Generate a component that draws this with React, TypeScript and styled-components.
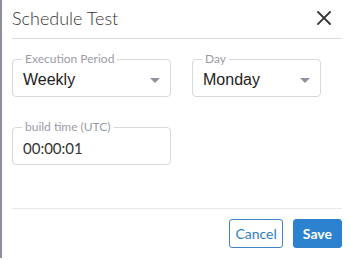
import React from "react";
import styled, { createGlobalStyle } from "styled-components";

const Global = createGlobalStyle`
  html, body { margin: 0; padding: 0; background: #ffffff; }
  body { font-family: Lato, "Liberation Sans", Arial, sans-serif; }
  * { box-sizing: border-box; }
`;

const Page = styled.div`
  display: flex;
  width: 351px;
  height: 260px;
  background: #ffffff;
`;

const Backdrop = styled.div`
  width: 2px;
  height: 258px;
  background: #8d909a;
  flex: none;
`;

const Dialog = styled.div`
  flex: 1;
  height: 258px;
  display: flex;
  flex-direction: column;
  padding: 0 9px 0 10px;
  background: #ffffff;
  border-bottom-left-radius: 3px;
`;

const Header = styled.div`
  height: 39px;
  display: flex;
  align-items: center;
  justify-content: space-between;
  padding-bottom: 2px;
  border-bottom: 1px solid #dcdde3;
`;

const Title = styled.h2`
  margin: 0;
  font-family: Lato, "Open Sans", sans-serif;
  font-size: 18px;
  font-weight: 300;
  color: #333;
  line-height: 22px;
`;

const CloseButton = styled.button`
  width: 16px;
  height: 16px;
  margin-right: 10px;
  padding: 0;
  border: none;
  background: transparent;
  display: flex;
  align-items: center;
  justify-content: center;
  color: #333;
`;

const Body = styled.div`
  flex: 1;
  display: flex;
  flex-direction: column;
  gap: 23px;
  padding-top: 13px;
  border-bottom: 1px solid #e9e9ec;
`;

const Row = styled.div`
  display: flex;
  gap: 21px;
`;

const Field = styled.fieldset<{ $w: number }>`
  width: ${(p) => p.$w}px;
  margin: 0;
  padding: 0 9px 0 9px;
  border: 1px solid #d8d9df;
  border-radius: 4px;
  min-width: 0;
`;

const Legend = styled.legend`
  padding: 0 3px;
  font-family: Lato, "Open Sans", sans-serif;
  font-size: 12px;
  line-height: 14px;
  color: #9a9ca8;
`;

const SelectRow = styled.div`
  height: 30px;
  display: flex;
  align-items: center;
  justify-content: space-between;
  padding: 0 0 2px 1px;
`;

const SelectValue = styled.span`
  font-family: "Liberation Sans", Arial, sans-serif;
  font-size: 16px;
  color: #222;
`;

const Caret = styled.span`
  width: 0;
  height: 0;
  border-left: 5.5px solid transparent;
  border-right: 5.5px solid transparent;
  border-top: 5px solid #8f93a0;
  margin-right: 1px;
`;

const InputValue = styled.div`
  height: 30px;
  display: flex;
  align-items: center;
  padding: 0 0 2px 1px;
  font-family: Lato, "Open Sans", sans-serif;
  font-size: 15px;
  color: #333;
`;

const Footer = styled.div`
  height: 49px;
  display: flex;
  justify-content: flex-end;
  align-items: flex-start;
  gap: 10px;
  padding-top: 10px;
`;

const Button = styled.button<{ $primary?: boolean }>`
  height: 29px;
  padding: 0 ${(p) => (p.$primary ? "9px" : "5px")};
  border-radius: 3px;
  font-family: Lato, "Open Sans", sans-serif;
  font-size: 14px;
  font-weight: ${(p) => (p.$primary ? 700 : 400)};
  border: 1px solid ${(p) => (p.$primary ? "#2d82d0" : "#3a86c8")};
  background: ${(p) => (p.$primary ? "#2d82d0" : "#ffffff")};
  color: ${(p) => (p.$primary ? "#ffffff" : "#2f7dc0")};
`;

export default function App() {
  return (
    <>
      <Global />
      <Page>
        <Backdrop />
        <Dialog>
          <Header>
            <Title>Schedule Test</Title>
            <CloseButton aria-label="Close">
              <svg width="14" height="14" viewBox="0 0 14 14">
                <path d="M1 1 L13 13 M13 1 L1 13" stroke="currentColor" strokeWidth="1.8" strokeLinecap="square" />
              </svg>
            </CloseButton>
          </Header>
          <Body>
            <Row>
              <Field $w={159}>
                <Legend>Execution Period</Legend>
                <SelectRow>
                  <SelectValue>Weekly</SelectValue>
                  <Caret />
                </SelectRow>
              </Field>
              <Field $w={129}>
                <Legend>Day</Legend>
                <SelectRow>
                  <SelectValue>Monday</SelectValue>
                  <Caret />
                </SelectRow>
              </Field>
            </Row>
            <Row>
              <Field $w={159}>
                <Legend>build time (UTC)</Legend>
                <InputValue>00:00:01</InputValue>
              </Field>
            </Row>
          </Body>
          <Footer>
            <Button>Cancel</Button>
            <Button $primary>Save</Button>
          </Footer>
        </Dialog>
      </Page>
    </>
  );
}
